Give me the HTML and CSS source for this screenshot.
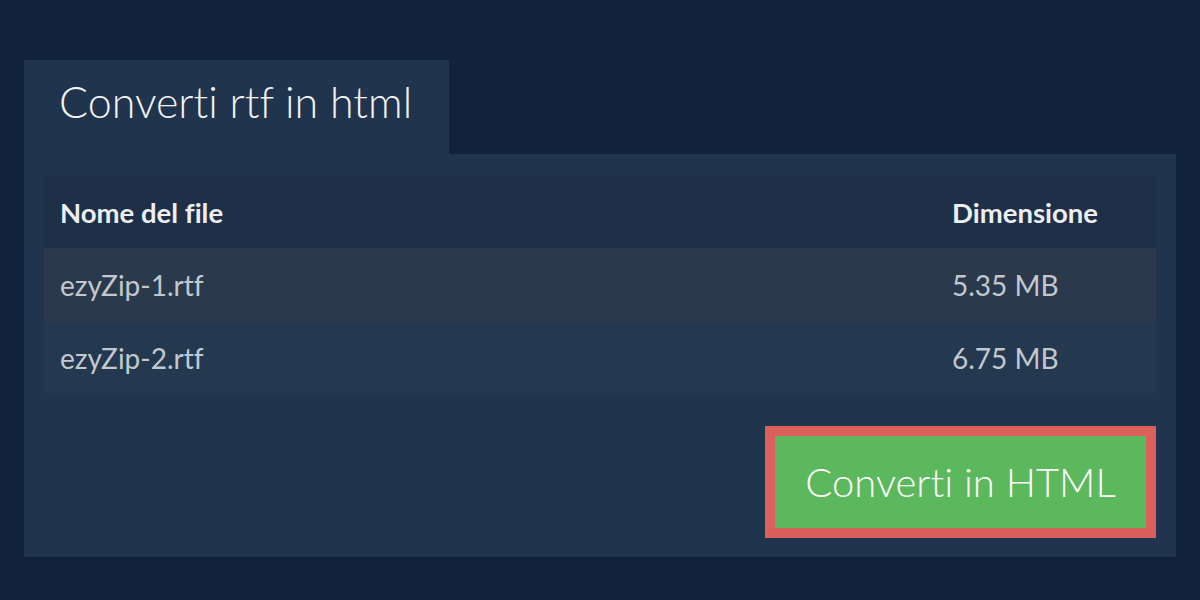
FILE: index.html
```html
<!DOCTYPE html>
<html lang="it">
<head>
<meta charset="utf-8">
<title>Converti rtf in html</title>
<link rel="stylesheet" href="styles.css">
</head>
<body>
<main class="wrap">
  <div class="tab"><h1 class="title">Converti rtf in html</h1></div>
  <section class="panel">
    <table class="files">
      <thead>
        <tr><th class="name">Nome del file</th><th class="size">Dimensione</th></tr>
      </thead>
      <tbody>
        <tr class="odd"><td class="name">ezyZip-1.rtf</td><td class="size">5.35 MB</td></tr>
        <tr class="even"><td class="name">ezyZip-2.rtf</td><td class="size">6.75 MB</td></tr>
      </tbody>
    </table>
    <div class="actions">
      <button class="convert">Converti in HTML</button>
    </div>
  </section>
</main>
</body>
</html>
```

FILE: styles.css
```css
* { box-sizing: border-box; }
html, body { margin: 0; padding: 0; }
body {
  background: #10233a;
  font-family: Lato, "Open Sans", sans-serif;
  font-variant-ligatures: none;
  width: 1200px;
  height: 600px;
  overflow: hidden;
}
.wrap {
  padding: 60px 24px 0 24px;
}
.tab {
  width: 425px;
  height: 94px;
  background: #20344d;
  padding: 0 0 0 35px;
}
.title {
  margin: 0;
  font-weight: 300;
  font-size: 43px;
  line-height: 84px;
  color: #f2f3f4;
}
.panel {
  background: #20344d;
  padding: 22px 20px 19px 20px;
}
.files {
  width: 100%;
  border-collapse: collapse;
}
.files th, .files td {
  text-align: left;
  padding: 0 16px;
}
.files th {
  background: #1e3047;
  height: 72px;
  font-size: 27.5px;
  font-weight: 700;
  color: #eceef0;
}
.files td {
  font-size: 28px;
  font-weight: 400;
  color: #c3c8ce;
  height: 74px;
}
.files th.size, .files td.size { width: 220px; }
.odd td { background: #2a3a4c; }
.even td { background: #243850; height: 71px; }
.actions {
  display: flex;
  justify-content: flex-end;
  margin-top: 33px;
}
.convert {
  width: 391px;
  height: 112px;
  background: #5cb85c;
  border: 10px solid #db605c;
  color: #ffffff;
  font-family: Lato, sans-serif;
  font-variant-ligatures: none;
  font-size: 40px;
  font-weight: 300;
  padding: 0;
}
```
